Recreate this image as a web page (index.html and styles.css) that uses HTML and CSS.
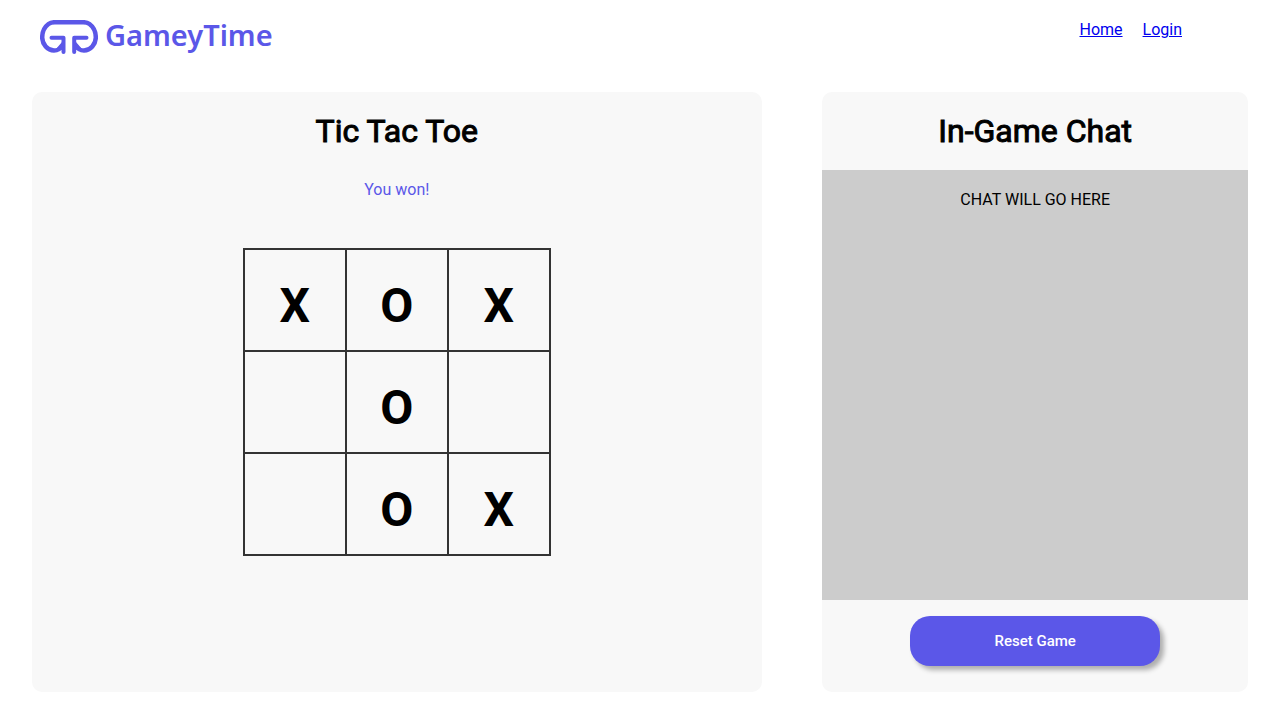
FILE: index.html
```html
<!DOCTYPE html>
<html lang="en">
<head>
<meta charset="utf-8">
<meta name="viewport" content="width=device-width, initial-scale=1">
<title>GameyTime</title>
<link rel="stylesheet" href="styles.css">
</head>
<body>
<header class="header">
  <div class="logo">
    <svg class="logo-mark" viewBox="0 0 58 34" width="58" height="34" aria-hidden="true">
      <g fill="none" stroke="#5b57e8" stroke-width="4" stroke-linejoin="round">
        <path d="M22.500 25.500C20.500 29 17.500 30.500 14 30.500C7.500 30.500 2.200 24 2.200 17.500C2.200 12 4.500 7 8.500 4C10.500 2.500 12.500 2.200 15 2.200H43C45.500 2.200 47.500 2.500 49.500 4C53.500 7 55.800 12 55.800 17.500C55.800 24 50.500 30.500 44 30.500C40.500 30.500 37.500 29 35.500 25.500" stroke-width="4.500"/>
        <path d="M11.500 17.800H23.500V32M46.500 17.800H34.200V32" stroke-linecap="round"/>
      </g>
      <path d="M22 22L16 29L24 30ZM36 22L42 29L34 30Z" fill="#5b57e8"/>
    </svg>
    <span class="logo-name">GameyTime</span>
  </div>
  <nav class="nav">
    <a href="#home">Home</a>
    <a href="#login">Login</a>
  </nav>
</header>
<main class="main">
  <section class="panel game">
    <h1 class="title">Tic Tac Toe</h1>
    <p class="status">You won!</p>
    <div class="board">
      <button class="cell" type="button">X</button>
      <button class="cell" type="button">O</button>
      <button class="cell" type="button">X</button>
      <button class="cell" type="button" aria-label="Empty"></button>
      <button class="cell" type="button">O</button>
      <button class="cell" type="button" aria-label="Empty"></button>
      <button class="cell" type="button" aria-label="Empty"></button>
      <button class="cell" type="button">O</button>
      <button class="cell" type="button">X</button>
    </div>
  </section>
  <section class="panel chat">
    <h1 class="title">In-Game Chat</h1>
    <div class="messages">CHAT WILL GO HERE</div>
    <button class="reset" type="button">Reset Game</button>
  </section>
</main>
</body>
</html>
```
FILE: styles.css
```css
* {
  box-sizing: border-box;
}

body {
  margin: 0;
  background: #fff;
  color: #000;
  font-family: Roboto, "Liberation Sans", sans-serif;
  font-size: 16px;
  font-weight: 400;
  line-height: 20px;
}

.header {
  display: flex;
  justify-content: space-between;
  align-items: flex-start;
  padding: 20px 98px 38px 40px;
}

.logo {
  display: flex;
  gap: 7px;
}

.logo-mark {
  display: block;
}

.logo-name {
  color: #5b57e8;
  font-family: "Noto Sans", sans-serif;
  font-size: 29px;
  font-weight: 600;
  line-height: 30px;
}

.nav {
  display: flex;
  gap: 20px;
}

.nav a {
  color: #0000ee;
}

.main {
  display: flex;
  justify-content: space-between;
  padding: 0 32px 28px;
}

.panel {
  display: flex;
  flex-direction: column;
  align-items: center;
  min-height: 600px;
  border-radius: 10px;
  background: #f8f8f8;
}

.game {
  width: 60%;
}

.chat {
  width: 35%;
}

.title {
  margin: 0;
  padding: 20px 0;
  font-size: 32px;
  font-weight: 400;
  line-height: 38px;
  -webkit-text-stroke: 1px #000;
}

.status {
  margin: 10px 0 48px;
  color: #5b57e8;
}

.board {
  display: grid;
  grid-template-columns: repeat(3, 100px);
  grid-auto-rows: 100px;
  gap: 2px;
  padding: 2px;
  background: #333;
}

.cell {
  border: 0;
  padding: 12px 0 0;
  background: #f8f8f8;
  color: #000;
  font-family: inherit;
  font-size: 48px;
  font-weight: 700;
  line-height: 56px;
}

.messages {
  flex: 1;
  align-self: stretch;
  padding: 20px;
  background: #ccc;
  text-align: center;
}

.reset {
  width: 250px;
  max-width: 90%;
  height: 50px;
  margin: 16px 0 26px;
  border: 0;
  border-radius: 20px;
  background: #5b57e8;
  box-shadow: 4px 4px 5px rgba(0, 0, 0, 0.3);
  color: #fff;
  font-family: inherit;
  font-size: 15px;
  font-weight: 500;
}
```
